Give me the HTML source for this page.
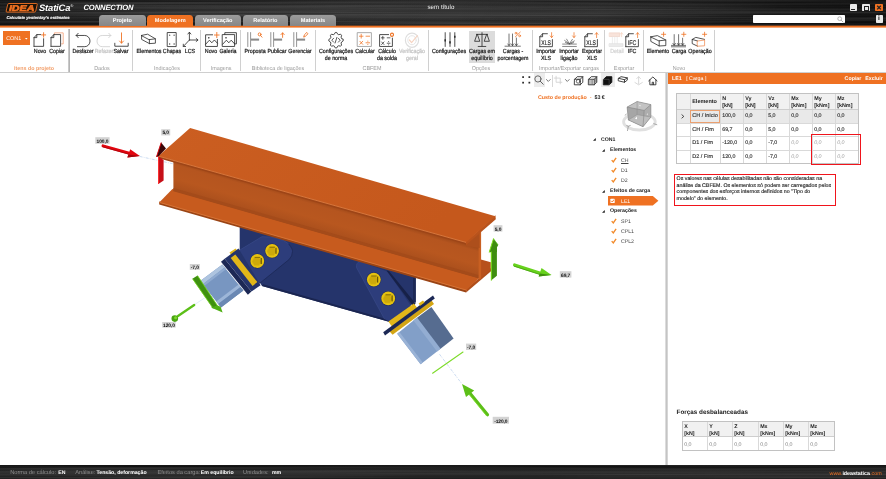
<!DOCTYPE html>
<html><head><meta charset="utf-8"><title>IDEA StatiCa Connection</title>
<style>
html,body{margin:0;padding:0;}
body{-webkit-font-smoothing:antialiased;text-rendering:geometricPrecision;width:886px;height:479px;overflow:hidden;background:#fff;font-family:"Liberation Sans",sans-serif;position:relative;color:#222;}
#root{position:absolute;left:0;top:0;width:886px;height:479px;will-change:transform;}
.a{position:absolute;}
.t{position:absolute;white-space:nowrap;line-height:1;}
.c{transform:translateX(-50%);text-align:center;}
.rl.c{transform:translateX(-50%) scaleX(0.9);}
.gl.c{transform:translateX(-50%) scaleX(0.95);}
svg{position:absolute;overflow:visible;}
#tb{left:0;top:0;width:886px;height:26px;background:
 linear-gradient(90deg,rgba(0,0,0,0.5) 0,rgba(0,0,0,0.35) 90px,rgba(0,0,0,0.05) 330px,rgba(0,0,0,0) 450px,rgba(0,0,0,0.12) 600px,rgba(0,0,0,0.55) 780px,rgba(0,0,0,0.68) 886px),
 repeating-linear-gradient(180deg,rgba(255,255,255,0.035) 0px,rgba(255,255,255,0) 1px,rgba(0,0,0,0.08) 2px,rgba(255,255,255,0) 3px),
 linear-gradient(180deg,#1a1a1a 0px,#292929 2px,#323232 6px,#353535 12px,#393939 15px,#2e2e2e 18px,#272727 22px,#202020 26px);}
.tab{z-index:2;position:absolute;top:15px;height:11px;background:linear-gradient(180deg,#9b9b9b,#878787);border-radius:3.5px 3.5px 0 0;color:#fff;font-weight:bold;font-size:5.6px;text-align:center;line-height:13px;}
.tab.on{background:#ef7122;}
.rl{font-size:5.9px;color:#1a1a1a;-webkit-text-stroke:0.22px currentColor;}
.gl{font-size:5.7px;color:#9a9a9a;}
.sep{position:absolute;top:30px;height:41px;width:0.8px;background:#d0d0d0;}
.lab{position:absolute;background:#d3d3d3;color:#111;font-weight:bold;font-size:4.9px;letter-spacing:-0.1px;line-height:6px;text-align:center;white-space:nowrap;}
</style></head><body><div id="root">
<div id="tb" class="a"></div>
<svg style="left:0;top:0" width="886" height="26" viewBox="0 0 886 26"><defs><filter id="br" x="0" y="0" width="100%" height="100%"><feTurbulence type="fractalNoise" baseFrequency="0.003 0.55" numOctaves="2" seed="7" result="n"/><feColorMatrix type="matrix" values="0 0 0 0 1  0 0 0 0 1  0 0 0 0 1  1.6 0 0 0 -0.62"/></filter></defs><rect width="886" height="26" filter="url(#br)" opacity="0.16"/></svg>
<svg style="left:6.4px;top:2.6px" width="32" height="10" viewBox="0 0 32 10"><path d="M2.9 0.5H30.4Q31.5 0.5 31.2 1.6L29.7 8.1Q29.4 9.1 28.3 9.1H0.9Q-0.1 9.1 0.2 8L1.7 1.5Q2 0.5 2.9 0.5Z" fill="#1a1208" stroke="#ef7122" stroke-width="0.9"/><text x="2.9" y="7.75" font-family="Liberation Sans" font-weight="bold" font-style="italic" font-size="8.2" fill="#ef7122" stroke="#ef7122" stroke-width="0.55" textLength="25.6" lengthAdjust="spacingAndGlyphs">IDEA</text></svg>
<div class="t" style="left:39px;top:2.8px;font-size:9.4px;font-weight:bold;font-style:italic;color:#fff;letter-spacing:-0.15px">StatiCa<span style="font-size:4px;vertical-align:4px;font-weight:normal">&#174;</span></div>
<div class="t" style="left:83.5px;top:3.6px;font-size:7.6px;font-style:italic;color:#fff;letter-spacing:-0.12px;font-weight:bold">CONNECTION</div>
<div class="t" style="left:6.5px;top:15.6px;font-size:4.2px;font-style:italic;font-weight:bold;color:#f2f2f2;-webkit-text-stroke:0.15px #f2f2f2">Calculate yesterday's estimates</div>
<div class="t" style="left:427.5px;top:5.4px;font-size:6.2px;color:#f0f0f0">sem t&iacute;tulo</div>
<div class="tab" style="left:98.8px;width:47.0px">Projeto</div>
<div class="tab on" style="left:147.2px;width:46.1px">Modelagem</div>
<div class="tab" style="left:195.0px;width:45.5px">Verifica&ccedil;&atilde;o</div>
<div class="tab" style="left:242.6px;width:45.4px">Relat&oacute;rio</div>
<div class="tab" style="left:290.0px;width:45.9px">Materiais</div>
<div class="a" style="left:0;top:25px;width:886px;height:1px;background:#6a3e22"></div><div class="a" style="left:0;top:26px;width:886px;height:1px;background:#ef7122"></div><div class="a" style="left:0;top:27px;width:886px;height:1px;background:#f6aa7a"></div>
<div class="a" style="left:849.6px;top:4px;width:7.6px;height:7.2px;background:#e9e9e9;border-radius:0.8px"></div><div class="a" style="left:851.4px;top:8.6px;width:4px;height:1.2px;background:#222"></div>
<div class="a" style="left:862.2px;top:4px;width:7.6px;height:7.2px;background:#e9e9e9;border-radius:0.8px"></div><div class="a" style="left:864px;top:5.6px;width:3.2px;height:3px;border:0.9px solid #222;border-top-width:1.5px"></div>
<div class="a" style="left:874.7px;top:4px;width:8px;height:7.2px;background:#ef7122;border-radius:0.8px"></div><svg style="left:874.7px;top:4px" width="8" height="7.2"><path d="M2.2 1.8L5.8 5.4M5.8 1.8L2.2 5.4" stroke="#222" stroke-width="1.3"/></svg>
<div class="a" style="left:752.5px;top:15.2px;width:92.5px;height:8.2px;background:#fff;border-radius:0.8px"></div><svg style="left:836.5px;top:16.2px" width="7" height="7"><circle cx="2.7" cy="2.7" r="1.9" fill="none" stroke="#999" stroke-width="0.7"/><path d="M4.1 4.1L6.3 6.3" stroke="#999" stroke-width="0.8"/></svg>
<div class="a" style="left:875.6px;top:15.2px;width:7.4px;height:8.2px;background:#e9e9e9;border-radius:0.8px"></div><div class="t" style="left:878.1px;top:16px;font-size:6.6px;font-weight:bold;color:#111">i</div>
<div class="a" style="left:0;top:28px;width:886px;height:43.5px;background:#fff;border-bottom:0.8px solid #cfcfcf"></div>
<div class="a" style="left:3px;top:31px;width:26.8px;height:13.6px;background:#ef7122"></div><div class="t" style="left:6.2px;top:36.6px;font-size:5.4px;color:#fff">CON1</div><svg style="left:24.9px;top:37.6px" width="3" height="2"><polygon points="0,0 2.6,0 1.3,1.6" fill="#fff"/></svg>
<div class="sep" style="left:69.0px"></div><div class="sep" style="left:132.0px"></div><div class="sep" style="left:200.0px"></div><div class="sep" style="left:240.0px"></div><div class="sep" style="left:314.5px"></div><div class="sep" style="left:428.0px"></div><div class="sep" style="left:532.0px"></div><div class="sep" style="left:604.0px"></div><div class="sep" style="left:642.8px"></div><div class="sep" style="left:713.6px"></div><div class="a" style="left:68px;top:29px;width:2px;height:43px;background:linear-gradient(90deg,#c9c9c9 0,#c9c9c9 1px,#b4b4b4 1px)"></div>
<div class="t c gl" style="left:34.3px;top:66.6px;color:#f3a06c;font-weight:bold;font-size:5.5px;transform:translateX(-50%) scaleX(0.97);">Itens do projeto</div><div class="t c gl" style="left:101.5px;top:66.6px;">Dados</div><div class="t c gl" style="left:167.0px;top:66.6px;">Indica&ccedil;&otilde;es</div><div class="t c gl" style="left:221.0px;top:66.6px;">Imagens</div><div class="t c gl" style="left:278.0px;top:66.6px;">Biblioteca de liga&ccedil;&otilde;es</div><div class="t c gl" style="left:372.0px;top:66.6px;">CBFEM</div><div class="t c gl" style="left:481.0px;top:66.6px;">Op&ccedil;&otilde;es</div><div class="t c gl" style="left:569.0px;top:66.6px;">Importar/Exportar cargas</div><div class="t c gl" style="left:624.0px;top:66.6px;">Exportar</div><div class="t c gl" style="left:679.0px;top:66.6px;">Novo</div>
<div class="a" style="left:469px;top:31px;width:26.2px;height:32.4px;background:#dcdcdc"></div>
<div class="t c rl" style="left:39.5px;top:50px;color:#1a1a1a">Novo</div><div class="t c rl" style="left:57.0px;top:50px;color:#1a1a1a">Copiar</div><div class="t c rl" style="left:83.0px;top:50px;color:#1a1a1a">Desfazer</div><div class="t c rl" style="left:103.5px;top:50px;color:#c4c4c4">Refazer</div><div class="t c rl" style="left:121.0px;top:50px;color:#1a1a1a">Salvar</div><div class="t c rl" style="left:148.8px;top:50px;color:#1a1a1a">Elementos</div><div class="t c rl" style="left:171.8px;top:50px;color:#1a1a1a">Chapas</div><div class="t c rl" style="left:190.0px;top:50px;color:#1a1a1a">LCS</div><div class="t c rl" style="left:211.0px;top:50px;color:#1a1a1a">Novo</div><div class="t c rl" style="left:228.3px;top:50px;color:#1a1a1a">Galeria</div><div class="t c rl" style="left:255.0px;top:50px;color:#1a1a1a">Proposta</div><div class="t c rl" style="left:277.2px;top:50px;color:#1a1a1a">Publicar</div><div class="t c rl" style="left:299.8px;top:50px;color:#1a1a1a">Gerenciar</div><div class="t c rl" style="left:335.8px;top:50px;color:#1a1a1a">Configura&ccedil;&otilde;es</div><div class="t c rl" style="left:335.8px;top:56.8px;color:#1a1a1a">de norma</div><div class="t c rl" style="left:364.8px;top:50px;color:#1a1a1a">Calcular</div><div class="t c rl" style="left:386.5px;top:50px;color:#1a1a1a">C&aacute;lculo</div><div class="t c rl" style="left:386.5px;top:56.8px;color:#1a1a1a">da solda</div><div class="t c rl" style="left:411.8px;top:50px;color:#c4c4c4">Verifica&ccedil;&atilde;o</div><div class="t c rl" style="left:411.8px;top:56.8px;color:#c4c4c4">geral</div><div class="t c rl" style="left:449.3px;top:50px;color:#1a1a1a">Configura&ccedil;&otilde;es</div><div class="t c rl" style="left:482.2px;top:50px;color:#1a1a1a">Cargas em</div><div class="t c rl" style="left:482.2px;top:56.8px;color:#1a1a1a">equil&iacute;brio</div><div class="t c rl" style="left:513.3px;top:50px;color:#1a1a1a">Cargas -</div><div class="t c rl" style="left:513.3px;top:56.8px;color:#1a1a1a">porcentagem</div><div class="t c rl" style="left:546.4px;top:50px;color:#1a1a1a">Importar</div><div class="t c rl" style="left:546.4px;top:56.8px;color:#1a1a1a">XLS</div><div class="t c rl" style="left:569.3px;top:50px;color:#1a1a1a">Importar</div><div class="t c rl" style="left:569.3px;top:56.8px;color:#1a1a1a">liga&ccedil;&atilde;o</div><div class="t c rl" style="left:591.5px;top:50px;color:#1a1a1a">Exportar</div><div class="t c rl" style="left:591.5px;top:56.8px;color:#1a1a1a">XLS</div><div class="t c rl" style="left:616.5px;top:50px;color:#d2d2d2">Detail</div><div class="t c rl" style="left:632.3px;top:50px;color:#1a1a1a">IFC</div><div class="t c rl" style="left:657.5px;top:50px;color:#1a1a1a">Elemento</div><div class="t c rl" style="left:678.5px;top:50px;color:#1a1a1a">Carga</div><div class="t c rl" style="left:699.5px;top:50px;color:#1a1a1a">Opera&ccedil;&atilde;o</div>
<svg style="left:33.0px;top:31.9px" width="14" height="15.12" viewBox="0 0 14 14" preserveAspectRatio="none" fill="none" stroke-linecap="round" stroke-linejoin="round"><path d="M1 13.3V5.2L3.8 2.4H7.6M10.6 6.2V13.3H1M1 5.2H3.8V2.4" stroke="#2a2a2a" stroke-width="0.8"/><path d="M10.6 0.6V4.8M8.5 2.7H12.7" stroke="#ef7122" stroke-width="0.85"/></svg>
<svg style="left:50.0px;top:31.9px" width="14" height="15.12" viewBox="0 0 14 14" preserveAspectRatio="none" fill="none" stroke-linecap="round" stroke-linejoin="round"><path d="M4.4 2.2V0.8H13.2V11H11.6" stroke="#f3a27a" stroke-width="0.8"/><path d="M1 13.3V5.2L3.8 2.4H10.6V13.3H1M1 5.2H3.8V2.4" stroke="#2a2a2a" stroke-width="0.8"/></svg>
<svg style="left:75.0px;top:31.9px" width="16" height="15.12" viewBox="0 0 16 14" preserveAspectRatio="none" fill="none" stroke-linecap="round" stroke-linejoin="round"><path d="M1.2 3.2H9.8A5.2 5.2 0 0 1 9.8 13.6H2.4" stroke="#2a2a2a" stroke-width="0.8"/><path d="M3.2 1.2L1.2 3.2L3.2 5.2" stroke="#2a2a2a" stroke-width="0.8"/></svg>
<svg style="left:96.0px;top:31.9px" width="16" height="15.12" viewBox="0 0 16 14" preserveAspectRatio="none" fill="none" stroke-linecap="round" stroke-linejoin="round"><path d="M14.8 3.2H6.2A5.2 5.2 0 0 0 6.2 13.6H13.6" stroke="#cfcfcf" stroke-width="0.8"/><path d="M12.8 1.2L14.8 3.2L12.8 5.2" stroke="#cfcfcf" stroke-width="0.8"/></svg>
<svg style="left:114.0px;top:31.9px" width="15" height="15.12" viewBox="0 0 15 14" preserveAspectRatio="none" fill="none" stroke-linecap="round" stroke-linejoin="round"><path d="M0.8 10.4V13.2H14.2V10.4" stroke="#2a2a2a" stroke-width="0.8"/><path d="M7.5 0.8V10.2M5.6 8.4L7.5 10.4L9.4 8.4" stroke="#ef7122" stroke-width="0.85"/></svg>
<svg style="left:167.2px;top:31.9px" width="10" height="15.12" viewBox="0 0 10 14" preserveAspectRatio="none" fill="none" stroke-linecap="round" stroke-linejoin="round"><rect x="0.6" y="0.5" width="8.6" height="13" stroke="#2a2a2a" stroke-width="0.8"/><circle cx="2.7" cy="2.9" r="0.6" fill="#2a2a2a"/><circle cx="7.1" cy="2.9" r="0.6" fill="#2a2a2a"/><circle cx="2.7" cy="11.1" r="0.6" fill="#2a2a2a"/><circle cx="7.1" cy="11.1" r="0.6" fill="#2a2a2a"/></svg>
<svg style="left:204.6px;top:31.9px" width="14" height="15.12" viewBox="0 0 14 14" preserveAspectRatio="none" fill="none" stroke-linecap="round" stroke-linejoin="round"><path d="M7.6 2.6H0.6V13.4H12.4V6.8" stroke="#2a2a2a" stroke-width="0.8"/><path d="M0.6 11.4L4.4 7.6L6.8 10L9.4 7.4L12.4 10.4" stroke="#2a2a2a" stroke-width="0.8"/><circle cx="3.8" cy="5.4" r="0.75" fill="#2a2a2a"/><path d="M11.8 0.4V5.2M9.4 2.8H14.2" stroke="#ef7122" stroke-width="0.85"/></svg>
<svg style="left:221.6px;top:31.9px" width="15" height="15.12" viewBox="0 0 15 14" preserveAspectRatio="none" fill="none" stroke-linecap="round" stroke-linejoin="round"><path d="M2.8 2.2V0.6H14.4V11H12.8" stroke="#2a2a2a" stroke-width="0.8"/><rect x="0.6" y="2.4" width="12" height="11" stroke="#2a2a2a" stroke-width="0.8"/><path d="M0.6 11.4L4.4 7.6L6.8 10L9.2 7.6L12.6 11" stroke="#2a2a2a" stroke-width="0.8"/><circle cx="4" cy="5.4" r="0.75" fill="#2a2a2a"/></svg>
<svg style="left:247.0px;top:31.9px" width="15" height="15.12" viewBox="0 0 15 14" preserveAspectRatio="none" fill="none" stroke-linecap="round" stroke-linejoin="round"><path d="M0.8 0.5V13.5M3.6 0.5V13.5" stroke="#777" stroke-width="0.75"/><rect x="3.9" y="6.1" width="8.2" height="1.9" fill="#8a8a8a"/><circle cx="12.6" cy="2.2" r="1.4" stroke="#ef7122" stroke-width="0.85"/><path d="M13.6 3.3L15 4.8" stroke="#ef7122" stroke-width="0.85"/></svg>
<svg style="left:269.5px;top:31.9px" width="15" height="15.12" viewBox="0 0 15 14" preserveAspectRatio="none" fill="none" stroke-linecap="round" stroke-linejoin="round"><path d="M0.8 0.5V13.5M3.6 0.5V13.5" stroke="#777" stroke-width="0.75"/><rect x="3.9" y="6.1" width="8.2" height="1.9" fill="#8a8a8a"/><path d="M12.6 5V0.8M11 2.4L12.6 0.8L14.2 2.4" stroke="#ef7122" stroke-width="0.85"/></svg>
<svg style="left:293.0px;top:31.9px" width="15" height="15.12" viewBox="0 0 15 14" preserveAspectRatio="none" fill="none" stroke-linecap="round" stroke-linejoin="round"><path d="M0.8 0.5V13.5M3.6 0.5V13.5" stroke="#777" stroke-width="0.75"/><rect x="3.9" y="6.1" width="8.2" height="1.9" fill="#8a8a8a"/><path d="M10.8 4.4L11.4 2.6L13.8 0.4L15 1.6L12.6 3.8Z" stroke="#ef7122" stroke-width="0.85"/></svg>
<svg style="left:328.0px;top:31.5px" width="16" height="16.20" viewBox="0 0 16 15" preserveAspectRatio="none" fill="none" stroke-linecap="round" stroke-linejoin="round"><polygon points="15.17,6.89 15.17,8.31 13.55,9.28 13.12,10.33 13.57,12.17 12.57,13.17 10.73,12.72 9.68,13.15 8.71,14.77 7.29,14.77 6.32,13.15 5.27,12.72 3.43,13.17 2.43,12.17 2.88,10.33 2.45,9.28 0.83,8.31 0.83,6.89 2.45,5.92 2.88,4.87 2.43,3.03 3.43,2.03 5.27,2.48 6.32,2.05 7.29,0.43 8.71,0.43 9.68,2.05 10.73,2.48 12.57,2.03 13.57,3.03 13.12,4.87 13.55,5.92" stroke="#2a2a2a" stroke-width="0.8"/><path d="M5.6 5.8L3.8 7.6L5.6 9.4M10.4 5.8L12.2 7.6L10.4 9.4M8.9 5L7.1 10.2" stroke="#2a2a2a" stroke-width="0.75"/></svg>
<svg style="left:357.4px;top:31.9px" width="15" height="15.12" viewBox="0 0 15 14" preserveAspectRatio="none" fill="none" stroke-linecap="round" stroke-linejoin="round"><rect x="0.6" y="0.6" width="13.8" height="12.8" stroke="#9a9a9a" stroke-width="0.8"/><path d="M2.4 3.9H6M4.2 2.1V5.7M9 3.9H12.6M2.9 8.6L5.7 11.4M5.7 8.6L2.9 11.4M9 10H12.6M10.8 8.4V8.6M10.8 11.4V11.6" stroke="#ef7122" stroke-width="0.75"/></svg>
<svg style="left:378.6px;top:31.9px" width="17" height="15.12" viewBox="0 0 17 14" preserveAspectRatio="none" fill="none" stroke-linecap="round" stroke-linejoin="round"><path d="M9.6 2.4H0.6V13.4H13.4V5.6" stroke="#2a2a2a" stroke-width="0.8"/><path d="M2.4 5.4H5.2M3.8 4V6.8M8.2 5.4H11M2.6 9.2L5 11.6M5 9.2L2.6 11.6M8.2 10.4H11M9.6 8.8V9M9.6 11.8V12" stroke="#2a2a2a" stroke-width="0.7"/><circle cx="13" cy="2.6" r="1.5" fill="#fff" stroke="#ef7122" stroke-width="1.1"/></svg>
<svg style="left:404.0px;top:31.7px" width="16" height="16.20" viewBox="0 0 16 15" preserveAspectRatio="none" fill="none" stroke-linecap="round" stroke-linejoin="round"><circle cx="8" cy="7.6" r="6.6" stroke="#dedede" stroke-width="1.2"/><circle cx="8" cy="7.6" r="4.2" stroke="#e4e4e4" stroke-width="0.9"/><path d="M5.4 7.4L7.6 9.8L13.4 3.4" stroke="#f6d3c0" stroke-width="1.1"/></svg>
<svg style="left:442.6px;top:31.9px" width="14" height="15.12" viewBox="0 0 14 14" preserveAspectRatio="none" fill="none" stroke-linecap="round" stroke-linejoin="round"><path d="M2.2 0.6V13.4M7 0.6V13.4M11.8 0.6V13.4" stroke="#2a2a2a" stroke-width="0.8"/><path d="M2.2 6.8V8.8M7 8.6V10.6M11.8 3.4V5.4" stroke="#2a2a2a" stroke-width="1.5" stroke-linecap="butt"/></svg>
<svg style="left:474.0px;top:31.9px" width="16" height="15.12" viewBox="0 0 16 14" preserveAspectRatio="none" fill="none" stroke-linecap="round" stroke-linejoin="round"><path d="M8 0.6V13M4.2 13.4H11.8M2.4 2.2H13.6M3 2.2L0.6 8.6H5.8L3.4 2.2M12.6 2.2L10.2 8.6H15.4L13 2.2" stroke="#2a2a2a" stroke-width="0.8"/></svg>
<svg style="left:539.0px;top:31.9px" width="15" height="15.12" viewBox="0 0 15 14" preserveAspectRatio="none" fill="none" stroke-linecap="round" stroke-linejoin="round"><path d="M0.8 13.6V4.4L3.6 1.6H8.4M13.4 7V13.6H0.8M0.8 4.4H3.6V1.6" stroke="#2a2a2a" stroke-width="0.8"/><text x="7.1" y="11.6" font-family="Liberation Sans" font-size="6.2" fill="#222" stroke="#222" stroke-width="0.12" text-anchor="middle" textLength="9.6" lengthAdjust="spacingAndGlyphs">XLS</text><path d="M12.6 0.6V5M11.2 3.6L12.6 5.2L14 3.6" stroke="#ef7122" stroke-width="0.7"/></svg>
<svg style="left:562.0px;top:31.9px" width="15" height="15.12" viewBox="0 0 15 14" preserveAspectRatio="none" fill="none" stroke-linecap="round" stroke-linejoin="round"><path d="M0.6 11.2H14.4M0.6 13.4H14.4M7.4 11L2.6 7.8M7.4 11L4.6 6.6M7.4 11L10.4 6.8M7.4 11L12.4 8.2M3.4 9.6L6 10.8M11.6 9.8L9 10.8" stroke="#444" stroke-width="0.6"/><path d="M12 0.6V5M10.6 3.6L12 5.2L13.4 3.6" stroke="#ef7122" stroke-width="0.7"/></svg>
<svg style="left:584.4px;top:31.9px" width="15" height="15.12" viewBox="0 0 15 14" preserveAspectRatio="none" fill="none" stroke-linecap="round" stroke-linejoin="round"><path d="M0.8 13.6V4.4L3.6 1.6H8.4M13.4 7V13.6H0.8M0.8 4.4H3.6V1.6" stroke="#2a2a2a" stroke-width="0.8"/><text x="7.1" y="11.6" font-family="Liberation Sans" font-size="6.2" fill="#222" stroke="#222" stroke-width="0.12" text-anchor="middle" textLength="9.6" lengthAdjust="spacingAndGlyphs">XLS</text><path d="M12.6 5.2V0.8M11.2 2.2L12.6 0.6L14 2.2" stroke="#ef7122" stroke-width="0.7"/></svg>
<svg style="left:608.6px;top:31.9px" width="15" height="15.12" viewBox="0 0 15 14" preserveAspectRatio="none" fill="none" stroke-linecap="round" stroke-linejoin="round"><rect x="0.6" y="0.8" width="10.2" height="3.4" fill="#f8e3da" stroke="#f1cfc2" stroke-width="0.6"/><path d="M12.6 4.4V0.8M11.4 2L12.6 0.6L13.8 2" stroke="#f6d3c0" stroke-width="0.7"/><path d="M3.4 4.4V10.6M5.8 4.4V10.6M8.2 4.4V10.6" stroke="#e2e2e2" stroke-width="0.6"/><rect x="0.4" y="10.8" width="13.6" height="2.6" fill="#ececec" stroke="#d8d8d8" stroke-width="0.5"/></svg>
<svg style="left:625.0px;top:31.9px" width="15" height="15.12" viewBox="0 0 15 14" preserveAspectRatio="none" fill="none" stroke-linecap="round" stroke-linejoin="round"><path d="M0.8 13.6V4.4L3.6 1.6H8.4M13.4 7V13.6H0.8M0.8 4.4H3.6V1.6" stroke="#2a2a2a" stroke-width="0.8"/><text x="7.1" y="11.6" font-family="Liberation Sans" font-size="6.2" fill="#222" stroke="#222" stroke-width="0.12" text-anchor="middle" textLength="8.6" lengthAdjust="spacingAndGlyphs">IFC</text><path d="M12.6 5.2V0.8M11.2 2.2L12.6 0.6L14 2.2" stroke="#ef7122" stroke-width="0.7"/></svg>
<svg style="left:0;top:0" width="886" height="80" viewBox="0 0 886 80" fill="none" stroke-linecap="round" stroke-linejoin="round"><path d="M650.8 36.8L657.4 35.6L665.8 40L659.2 40.8ZM650.8 36.8V41.4L659.2 46V40.8M659.2 46L665.8 45.6V40" stroke="#2a2a2a" stroke-width="0.8"/><path d="M663.6 32.2V36.4M661.5 34.3H665.7" stroke="#ef7122" stroke-width="0.8"/><path d="M674.2 34.6V45M672.9 43.4L674.2 45.2L675.5 43.4M678.6 34.6V45M677.3 43.4L678.6 45.2L679.9 43.4M682.6 38.2V45M681.3 43.4L682.6 45.2L683.9 43.4M671.4 45.4H685.6M671.4 46.8H685.6" stroke="#2a2a2a" stroke-width="0.65"/><path d="M683.8 32.2V36.4M681.7 34.3H685.9" stroke="#ef7122" stroke-width="0.8"/><path d="M697.6 41L692.2 39.4L695.8 37.4L704.6 39.4M692.2 39.4V43.6L697.6 46.2" stroke="#2a2a2a" stroke-width="0.8"/><path d="M697.6 41L704.6 40V45.8L697.6 46.2Z" stroke="#f0905a" stroke-width="0.8"/><path d="M704.6 32.2V36.4M702.5 34.3H706.7" stroke="#ef7122" stroke-width="0.8"/></svg>
<svg style="left:0;top:0" width="886" height="80" viewBox="0 0 886 80" fill="none" stroke-linecap="round" stroke-linejoin="round"><path d="M141.6 35.4L147.6 34.2L155.4 38.8L149.4 39.6ZM141.6 35.4V39.4L149.4 43.6V39.6M149.4 43.6L155.4 43.2V38.8" stroke="#2a2a2a" stroke-width="0.8"/><path d="M189.4 40V32.4M187.9 34L189.4 32.2L190.9 34M189.4 40H197.8M196.2 38.5L198 40L196.2 41.5M189.4 40L183.4 46.4M183.3 44.2V46.5H185.6" stroke="#2a2a2a" stroke-width="0.8"/></svg>
<svg style="left:0;top:0" width="886" height="80" viewBox="0 0 886 80" fill="none" stroke-linecap="round" stroke-linejoin="round"><path d="M509 34V45.4M507.8 44L509 45.6L510.2 44M512.5 34V45.4M511.3 44L512.5 45.6L513.7 44M516.4 38V45.4M515.2 44L516.4 45.6L517.6 44M505 46.2H520.4" stroke="#2a2a2a" stroke-width="0.65"/><path d="M515.4 36.8L520.2 32.2" stroke="#ef7122" stroke-width="0.8"/><circle cx="516" cy="33.2" r="0.95" stroke="#ef7122" stroke-width="0.7"/><circle cx="519.6" cy="35.8" r="0.95" stroke="#ef7122" stroke-width="0.7"/></svg>
<div class="a" style="left:533.6px;top:73.4px;width:11px;height:14px;background:#ececec"></div><div class="a" style="left:600.8px;top:73.4px;width:14.6px;height:14px;background:#ececec"></div><div class="a" style="left:552px;top:74.5px;width:0.7px;height:12px;background:#d8d8d8"></div>
<svg style="left:522.16px;top:76.44px" width="9.28" height="8.12" viewBox="0 0 8 7" fill="none" stroke-linecap="round" stroke-linejoin="round"><rect x="0.2" y="0.2" width="1.5" height="1.5" fill="#2a2a2a"/><rect x="5.6" y="0.2" width="1.5" height="1.5" fill="#2a2a2a"/><rect x="0.2" y="5" width="1.5" height="1.5" fill="#2a2a2a"/><rect x="5.6" y="5" width="1.5" height="1.5" fill="#2a2a2a"/></svg>
<svg style="left:534.28px;top:75.48px" width="10.44" height="10.44" viewBox="0 0 9 9" fill="none" stroke-linecap="round" stroke-linejoin="round"><circle cx="3.4" cy="3.4" r="2.7" stroke="#555" stroke-width="0.75"/><path d="M5.4 5.4L8 8" stroke="#555" stroke-width="0.8"/></svg>
<svg style="left:546.28px;top:78.96px" width="4.64" height="3.48" viewBox="0 0 4 3" fill="none" stroke-linecap="round" stroke-linejoin="round"><path d="M0.4 0.5L2 2.1L3.6 0.5" stroke="#555" stroke-width="0.7"/></svg>
<svg style="left:554.04px;top:76.44px" width="8.12" height="8.12" viewBox="0 0 7 7" fill="none" stroke-linecap="round" stroke-linejoin="round"><path d="M1.8 0.2V5.4H6.8M0.2 1.8H5.4V6.8" stroke="#cdcdcd" stroke-width="0.7"/></svg>
<svg style="left:565.28px;top:78.96px" width="4.64" height="3.48" viewBox="0 0 4 3" fill="none" stroke-linecap="round" stroke-linejoin="round"><path d="M0.4 0.5L2 2.1L3.6 0.5" stroke="#555" stroke-width="0.7"/></svg>
<svg style="left:573.93px;top:75.73px" width="9.74" height="9.74" viewBox="0 0 8.4 8.4" fill="none" stroke-linecap="round" stroke-linejoin="round"><path d="M0.6 2.8L2.8 0.6H7.6V5.4L5.4 7.6H0.6ZM0.6 2.8H5.4V7.6M5.4 2.8L7.6 0.6" stroke="#2a2a2a" stroke-width="0.75"/><circle cx="3.6" cy="4.6" r="1.6" stroke="#2a2a2a" stroke-width="0.6"/></svg>
<svg style="left:588.33px;top:75.73px" width="9.74" height="9.74" viewBox="0 0 8.4 8.4" fill="none" stroke-linecap="round" stroke-linejoin="round"><path d="M0.6 2.8L2.8 0.6H7.6V5.4L5.4 7.6H0.6ZM0.6 2.8H5.4V7.6M5.4 2.8L7.6 0.6" stroke="#2a2a2a" stroke-width="0.75"/><path d="M1.6 3.6V7M2.8 3.4V7M4 3.4V7M6.2 2.4V6M7 1.6V5.2" stroke="#2a2a2a" stroke-width="0.45"/></svg>
<svg style="left:603.33px;top:75.73px" width="9.74" height="9.74" viewBox="0 0 8.4 8.4" fill="none" stroke-linecap="round" stroke-linejoin="round"><path d="M0.6 2.8L2.8 0.6H7.6V5.4L5.4 7.6H0.6Z" fill="#111" stroke="#111" stroke-width="0.8"/><path d="M0.8 2.9H5.3V7.4" stroke="#777" stroke-width="0.35"/></svg>
<svg style="left:618.31px;top:76.44px" width="9.98" height="8.12" viewBox="0 0 8.6 7" fill="none" stroke-linecap="round" stroke-linejoin="round"><path d="M0.5 2L2.6 0.6L8 1.6V3.6L5.6 5.4L0.5 4.2ZM0.5 2L5.6 3.2L8 1.6M5.6 3.2V5.4" stroke="#2a2a2a" stroke-width="0.75"/></svg>
<svg style="left:633.56px;top:75.73px" width="9.28" height="9.74" viewBox="0 0 8 8.4" fill="none" stroke-linecap="round" stroke-linejoin="round"><path d="M4 0.6V6.8M2.4 2.2L4 0.6L5.6 2.2M0.8 5.6L4 7.6L7.2 5.6" stroke="#d0d0d0" stroke-width="0.7"/></svg>
<svg style="left:648.13px;top:75.73px" width="9.74" height="9.74" viewBox="0 0 8.4 8.4" fill="none" stroke-linecap="round" stroke-linejoin="round"><path d="M0.6 4.2L4.2 0.8L7.8 4.2M1.6 3.4V7.6H6.8V3.4M3.6 7.4V5.4H4.8V7.4" stroke="#2a2a2a" stroke-width="0.75"/></svg>
<div class="t" style="left:538px;top:96.1px;font-size:5.35px;font-weight:bold;color:#ef7122">Custo de produ&ccedil;&atilde;o<span style="color:#f3a06c"> &nbsp;-&nbsp; </span><span style="color:#222">53 &euro;</span></div>
<svg style="left:0;top:0" width="886" height="479" viewBox="0 0 886 479"><ellipse cx="639.4" cy="121.8" rx="15.8" ry="8.2" fill="none" stroke="#e0e0e0" stroke-width="2.9"/><polygon points="627.1,107.1 637.1,101.5 650.9,104.6 650.9,117.1 643,126.7 628.4,120" fill="#b9b9b9"/><polygon points="627.1,107.1 637.1,101.5 650.9,104.6 644.2,110.4" fill="#c3c3c3"/><polygon points="627.1,107.1 644.2,110.4 643,126.7 628.4,120" fill="#a6a6a6"/><polygon points="644.2,110.4 650.9,104.6 650.9,117.1 643,126.7" fill="#adadad"/><polygon points="628.4,120 637.1,114.6 650.9,117.1 643,126.7" fill="#c4c4c4" opacity="0.75"/><path d="M637.1 101.5V114.6M628.4 120L637.1 114.6L650.9 117.1" fill="none" stroke="#8c8c8c" stroke-width="0.5"/><path d="M627.1 107.1L637.1 101.5L650.9 104.6V117.1L643 126.7L628.4 120ZM627.1 107.1L644.2 110.4L650.9 104.6M644.2 110.4L643 126.7" fill="none" stroke="#858585" stroke-width="0.6"/><polygon points="639,105.6 640.6,105 640.2,106.6" fill="#fff"/><polygon points="635,118.8 636.8,116.4 637,119.2" fill="#fff"/><polygon points="646.6,114.4 647.6,113 647.8,115.2" fill="#e8e8e8"/><path d="M628.4 126.2L627.4 131M628.4 126.2L626.4 125.6M628.4 126.2L630.6 125.4M653.4 123.6L657.2 124.8M626.6 114L624.8 115.4" stroke="#8a8a8a" stroke-width="0.7" fill="none"/></svg>
<svg style="left:592.8px;top:138.0px" width="3" height="3"><polygon points="2.8,0 2.8,2.8 0,2.8" fill="#222"/></svg><div class="t" style="left:601.0px;top:138.0px;font-size:5.2px;font-weight:bold;">CON1</div>
<svg style="left:601.8px;top:148.6px" width="3" height="3"><polygon points="2.8,0 2.8,2.8 0,2.8" fill="#222"/></svg><div class="t" style="left:610.0px;top:147.7px;font-size:5.2px;font-weight:bold;">Elementos</div>
<svg style="left:610.8px;top:156.6px" width="6" height="6" fill="none"><path d="M0.7 3.1L2.3 4.9L5.1 0.9" stroke="#f28a2a" stroke-width="1.35"/></svg><div class="t" style="left:621.0px;top:158.9px;font-size:5.2px;text-decoration:underline;color:#444;">CH</div>
<svg style="left:610.8px;top:166.9px" width="6" height="6" fill="none"><path d="M0.7 3.1L2.3 4.9L5.1 0.9" stroke="#f28a2a" stroke-width="1.35"/></svg><div class="t" style="left:621.0px;top:169.2px;font-size:5.2px;color:#444;">D1</div>
<svg style="left:610.8px;top:177.2px" width="6" height="6" fill="none"><path d="M0.7 3.1L2.3 4.9L5.1 0.9" stroke="#f28a2a" stroke-width="1.35"/></svg><div class="t" style="left:621.0px;top:179.4px;font-size:5.2px;color:#444;">D2</div>
<svg style="left:601.8px;top:189.6px" width="3" height="3"><polygon points="2.8,0 2.8,2.8 0,2.8" fill="#222"/></svg><div class="t" style="left:610.0px;top:188.8px;font-size:5.2px;font-weight:bold;">Efeitos de carga</div>
<svg style="left:607.8px;top:195.6px" width="51" height="10"><polygon points="0,0 44.8,0 50.4,4.8 44.8,9.6 0,9.6" fill="#ef7122"/><rect x="2.4" y="2.7" width="4.3" height="4.3" fill="#fff" rx="0.6"/><path d="M3.3 4.9L4.3 6L6 3.6" stroke="#ef7122" stroke-width="0.9" fill="none"/></svg><div class="t" style="left:621.0px;top:199.9px;font-size:5.2px;color:#fff;">LE1</div>
<svg style="left:601.8px;top:210.2px" width="3" height="3"><polygon points="2.8,0 2.8,2.8 0,2.8" fill="#222"/></svg><div class="t" style="left:610.0px;top:209.3px;font-size:5.2px;font-weight:bold;">Opera&ccedil;&otilde;es</div>
<svg style="left:610.8px;top:217.8px" width="6" height="6" fill="none"><path d="M0.7 3.1L2.3 4.9L5.1 0.9" stroke="#f28a2a" stroke-width="1.35"/></svg><div class="t" style="left:621.0px;top:220.0px;font-size:5.2px;color:#444;">SP1</div>
<svg style="left:610.8px;top:228.0px" width="6" height="6" fill="none"><path d="M0.7 3.1L2.3 4.9L5.1 0.9" stroke="#f28a2a" stroke-width="1.35"/></svg><div class="t" style="left:621.0px;top:230.0px;font-size:5.2px;color:#444;">CPL1</div>
<svg style="left:610.8px;top:238.2px" width="6" height="6" fill="none"><path d="M0.7 3.1L2.3 4.9L5.1 0.9" stroke="#f28a2a" stroke-width="1.35"/></svg><div class="t" style="left:621.0px;top:239.8px;font-size:5.2px;color:#444;">CPL2</div>
<svg style="left:0;top:0" width="886" height="479" viewBox="0 0 886 479"><defs><linearGradient id="gw" gradientUnits="userSpaceOnUse" x1="300" y1="197.6" x2="292" y2="225.6"><stop offset="0" stop-color="#a64d1b"/><stop offset="0.1" stop-color="#b5551f"/><stop offset="0.55" stop-color="#b8571f"/><stop offset="0.85" stop-color="#ad511d"/><stop offset="1" stop-color="#a24a1a"/></linearGradient><linearGradient id="gt" x1="0" y1="0" x2="1" y2="0.3"><stop offset="0" stop-color="#cb5e21"/><stop offset="1" stop-color="#c5581c"/></linearGradient><linearGradient id="gtube1" gradientUnits="userSpaceOnUse" x1="212" y1="272" x2="233" y2="298"><stop offset="0" stop-color="#b4c8e2"/><stop offset="0.18" stop-color="#8ba6cc"/><stop offset="0.75" stop-color="#7391bc"/><stop offset="0.9" stop-color="#9ab3d6"/><stop offset="1" stop-color="#6785b0"/></linearGradient><radialGradient id="gb" cx="0.4" cy="0.6" r="0.7"><stop offset="0" stop-color="#ecc51f"/><stop offset="0.7" stop-color="#dcae16"/><stop offset="1" stop-color="#a8830c"/></radialGradient></defs><polygon points="239.7,226 239.7,250.5 262,286 389.9,322 415.6,301.5 415.6,276" fill="#25346b"/><polygon points="262,286 389.9,322 390.4,320.2 263,284.2" fill="#1a2550"/><path d="M230.7,255.5 L262,236.7 Q280,236.5 288.6,243.8 Q293,249.5 292.5,251.5 Q292.5,256 289,259.6 L259.6,283.4 Z" fill="#2d3d7b"/><path d="M230.7,255.5 L262,236.7 Q280,236.5 288.6,243.8" fill="none" stroke="#3a4b89" stroke-width="0.7"/><path d="M288.6,243.8 Q293,249.5 292.5,251.5 Q292.5,256 289,259.6 L259.6,283.4" fill="none" stroke="#1c2855" stroke-width="0.8"/><path d="M356.5,267.5 Q355.8,262.6 360,261.6 L387.8,271.7 L411.8,307.2 L389.9,322 L384.5,319 Z" fill="#2d3d7b"/><path d="M384.5,319 L356.5,267.5 Q355.8,262.6 360,261.6" fill="none" stroke="#3a4b89" stroke-width="0.6"/><polygon points="386.4,270.6 389,271 415.6,303.6 413.4,306.6" fill="#172148"/><polygon points="413,278 415.8,276 415.8,303 413,301" fill="#1c2855"/><ellipse cx="257.3" cy="261.0" rx="7.4" ry="7.4" fill="#1f2c5e"/><ellipse cx="257.3" cy="261.0" rx="6.9" ry="6.9" fill="#e6c20f"/><polygon points="261.4,261.5 259.1,265.6 254.3,265.6 252.0,261.5 254.3,257.4 259.1,257.4" fill="#cda90a" stroke="#d9b50c" stroke-width="0.5" stroke-linejoin="round"/><path d="M261.2 258.4L261.2 263.6" fill="none" stroke="#4e4004" stroke-width="1" stroke-linecap="round"/><path d="M255.1 257.4L259.9 257.4" fill="none" stroke="#6b5806" stroke-width="0.8" stroke-linecap="round"/><ellipse cx="272.1" cy="250.8" rx="7.4" ry="7.4" fill="#1f2c5e"/><ellipse cx="272.1" cy="250.8" rx="6.9" ry="6.9" fill="#e6c20f"/><polygon points="276.2,251.3 273.9,255.4 269.1,255.4 266.8,251.3 269.1,247.2 273.9,247.2" fill="#cda90a" stroke="#d9b50c" stroke-width="0.5" stroke-linejoin="round"/><path d="M276.0 248.2L276.0 253.4" fill="none" stroke="#4e4004" stroke-width="1" stroke-linecap="round"/><path d="M269.9 247.2L274.7 247.2" fill="none" stroke="#6b5806" stroke-width="0.8" stroke-linecap="round"/><ellipse cx="373.8" cy="279.6" rx="7.4" ry="7.4" fill="#1f2c5e"/><ellipse cx="373.8" cy="279.6" rx="6.9" ry="6.9" fill="#e6c20f"/><polygon points="377.9,280.1 375.6,284.2 370.8,284.2 368.5,280.1 370.8,276.0 375.6,276.0" fill="#cda90a" stroke="#d9b50c" stroke-width="0.5" stroke-linejoin="round"/><path d="M377.7 277.0L377.7 282.2" fill="none" stroke="#4e4004" stroke-width="1" stroke-linecap="round"/><path d="M371.6 276.0L376.4 276.0" fill="none" stroke="#6b5806" stroke-width="0.8" stroke-linecap="round"/><ellipse cx="388.2" cy="298.4" rx="7.4" ry="7.4" fill="#1f2c5e"/><ellipse cx="388.2" cy="298.4" rx="6.9" ry="6.9" fill="#e6c20f"/><polygon points="392.3,298.9 389.9,303.0 385.2,303.0 382.9,298.9 385.2,294.8 389.9,294.8" fill="#cda90a" stroke="#d9b50c" stroke-width="0.5" stroke-linejoin="round"/><path d="M392.1 295.8L392.1 301.0" fill="none" stroke="#4e4004" stroke-width="1" stroke-linecap="round"/><path d="M386.0 294.8L390.8 294.8" fill="none" stroke="#6b5806" stroke-width="0.8" stroke-linecap="round"/><polygon points="200.2,281 222.3,264.6 243.4,290.4 221,307.4" fill="#7896c1"/><polygon points="200.2,281 222.3,264.6 224.6,267.4 202.8,284.2" fill="#aec4df"/><polygon points="202.8,284.2 224.6,267.4 226,269.2 204.2,286" fill="#8faad0"/><polygon points="216.2,301.4 238.6,284.6 240.6,287 218.2,304" fill="#9db6d8"/><polygon points="218.2,304 240.6,287 243.4,290.4 221,307.4" fill="#6a88b3"/><polygon points="229.5,252.6 235.6,248.6 237.6,251 231.4,255.2" fill="#e2b719"/><polygon points="221,261.8 224.6,258.8 251.4,291.6 247.9,294.8" fill="#1c2855"/><polygon points="224.6,258.8 238.5,248.5 260.6,285.2 251.4,291.6" fill="#25346b"/><polygon points="230.7,257.9 235.3,254.6 257.3,282.1 252.6,286" fill="#e2b719"/><polygon points="397.2,333.8 416,318.4 439.6,349.6 420.6,364.2" fill="#829fc8"/><polygon points="416,318.4 431.4,307 453.6,338.4 439.6,349.6" fill="#566c90"/><polygon points="413.4,320.4 417,317.6 440.6,348.8 437,351.6" fill="#93add2"/><polygon points="397.2,333.8 399.4,332 422.8,362.6 420.6,364.2" fill="#9ab3d6"/><polygon points="388.4,321.6 413.9,303.4 418,309 392.6,327.4" fill="#e2b719"/><polygon points="389.6,331.6 431.6,300.6 434,304 392.6,334.8" fill="#d3a514"/><polygon points="383.2,332.2 433,295.6 434.8,298.4 385,335.4" fill="#1c2855"/><polygon points="418.6,303.6 423,300.4 424.6,302.6 420.2,305.8" fill="#e2b719"/><polygon points="159.2,201.5 466.1,289.2 466.1,292.4 159.2,204.6" fill="#9a4415"/><polygon points="466.1,289 491,268 491,271.2 466.1,292.4" fill="#b04e1a"/><polygon points="480,259.2 490.8,262.3 490.8,269.6 480,278.8" fill="#b7511c"/><polygon points="172.4,189 480.4,276.8 466.1,290.2 159.2,202.5" fill="#c75b1e"/><path d="M159.4 202.4L466 290" stroke="#d87639" stroke-width="0.9" fill="none"/><polygon points="173.4,155 480,240 480,278.6 173.4,190.8" fill="url(#gw)"/><polygon points="173.4,188 480,275.6 480,278.8 173.4,191.2" fill="#a44b1a"/><polygon points="478.6,230 481.1,229 481.1,278.4 478.6,279.4" fill="#c96022"/><polygon points="466.1,243 479.6,231 479.6,248 466.1,246" fill="#ad4f1c"/><polygon points="158.4,155 466.1,241.2 466.1,244.6 158.6,158.2" fill="#9e4517"/><polygon points="465.6,242 495.4,215.3 495.8,219.2 466.1,245" fill="#b9531c"/><polygon points="158.4,156 190.1,127.9 495.4,216.3 466.1,242.3" fill="url(#gt)"/><path d="M158.6 156.2L466 242.4" stroke="#db7b40" stroke-width="0.9" fill="none"/><path d="M139.6 156.4L174 164" stroke="#a9c4e8" stroke-width="0.6" stroke-dasharray="3 1.2 0.8 1.2" fill="none"/><path d="M194 305L206 297" stroke="#cfe0f4" stroke-width="0.6" fill="none"/><path d="M439.5 354.2L462 384" stroke="#a9c4e8" stroke-width="0.6" stroke-dasharray="3 1.2 0.8 1.2" fill="none"/><path d="M103 145.8L130 153.4" stroke="#e2060f" stroke-width="2.9" stroke-linecap="round"/><path d="M102.8 146.8L129.6 154.4" stroke="#b0060c" stroke-width="0.9" stroke-linecap="round"/><polygon points="139.9,156.1 127.4,157.6 130.2,149.2" fill="#e2060f"/><polygon points="139.9,156.1 127.4,157.6 128.4,154.4" fill="#a4060c"/><polygon points="156.3,157 161.1,142.4 166,148.4 163.6,151 158.4,156.5" fill="#3a0608"/><path d="M156.6 156.6L161.1 142.8" stroke="#e2060f" stroke-width="0.9" stroke-linecap="round"/><polygon points="158.4,156.5 163.6,160 163.6,180.4 158.4,184" fill="#c60f18"/><path d="M158.5 156.5V184" stroke="#ff2a2a" stroke-width="0.9"/><polygon points="491,252 496.9,247 496.9,275.8 491,280.4" fill="#3f8d10"/><polygon points="489.1,252.2 493.5,238.5 498.2,245 496.9,247.4 496.9,252 491,252.2" fill="#3f8d10"/><path d="M489.3 252L493.5 238.8M491.3 252V280.2" stroke="#80e01e" stroke-width="1" stroke-linecap="round" fill="none"/><path d="M493.5 238.8L498.2 245" stroke="#5cbf18" stroke-width="0.6" fill="none"/><path d="M514.6 264.9L540.4 273.2" stroke="#67d21c" stroke-width="3.2" stroke-linecap="round"/><path d="M514.2 266.2L540 274.5" stroke="#4aa512" stroke-width="0.9" stroke-linecap="round"/><polygon points="551.5,275.1 538.7,276.6 541.5,268" fill="#67d21c"/><polygon points="551.5,275.1 538.7,276.6 539.6,273.6" fill="#3f8f10"/><polygon points="192.4,278.8 197.6,275.6 217.4,305.6 213,308.6" fill="#3f9010"/><path d="M192.6 278.8L213.2 308.4M197.6 275.8L217.6 306" stroke="#74d622" stroke-width="0.8" fill="none"/><polygon points="211,307.4 222.6,312.6 220.6,306.8 217.6,305.4" fill="#4faf14"/><path d="M194.2 305L178 316" stroke="#5cbf18" stroke-width="2.3" stroke-linecap="round"/><circle cx="174.8" cy="318.6" r="3.3" fill="#4aa512"/><circle cx="175.6" cy="317.8" r="1.5" fill="#7ddb2a"/><path d="M432.6 373.2L463 352" stroke="#7ddb2a" stroke-width="1.1" stroke-linecap="round"/><path d="M487.6 414.8L469 392" stroke="#5cbf18" stroke-width="3" stroke-linecap="round"/><path d="M486.4 415.6L468 393" stroke="#7ddb2a" stroke-width="0.9" stroke-linecap="round"/><polygon points="462,384 474.2,390.4 466,397" fill="#5cbf18"/></svg>
<svg style="left:0;top:0" width="886" height="479"><rect x="95.3" y="137.2" width="14.3" height="6.6" fill="#d3d3d3"/></svg><div class="t c" style="left:102.45px;top:141.05px;font-size:4.9px;font-weight:bold;color:#111;letter-spacing:-0.1px">100,0</div><svg style="left:0;top:0" width="886" height="479"><rect x="161.2" y="129.2" width="9.0" height="6.2" fill="#d3d3d3"/></svg><div class="t c" style="left:165.70px;top:132.05px;font-size:4.9px;font-weight:bold;color:#111;letter-spacing:-0.1px">5,0</div><svg style="left:0;top:0" width="886" height="479"><rect x="493.6" y="225.2" width="8.8" height="6.4" fill="#d3d3d3"/></svg><div class="t c" style="left:498.00px;top:229.05px;font-size:4.9px;font-weight:bold;color:#111;letter-spacing:-0.1px">5,0</div><svg style="left:0;top:0" width="886" height="479"><rect x="559.8" y="271.2" width="11.6" height="6.4" fill="#d3d3d3"/></svg><div class="t c" style="left:565.60px;top:275.05px;font-size:4.9px;font-weight:bold;color:#111;letter-spacing:-0.1px">69,7</div><svg style="left:0;top:0" width="886" height="479"><rect x="189.8" y="264.0" width="10.0" height="5.8" fill="#d3d3d3"/></svg><div class="t c" style="left:194.80px;top:267.05px;font-size:4.9px;font-weight:bold;color:#111;letter-spacing:-0.1px">-7,0</div><svg style="left:0;top:0" width="886" height="479"><rect x="162.2" y="322.0" width="13.5" height="5.6" fill="#d3d3d3"/></svg><div class="t c" style="left:168.95px;top:325.05px;font-size:4.9px;font-weight:bold;color:#111;letter-spacing:-0.1px">120,0</div><svg style="left:0;top:0" width="886" height="479"><rect x="466.0" y="343.6" width="10.2" height="6.4" fill="#d3d3d3"/></svg><div class="t c" style="left:471.10px;top:347.05px;font-size:4.9px;font-weight:bold;color:#111;letter-spacing:-0.1px">-7,0</div><svg style="left:0;top:0" width="886" height="479"><rect x="492.7" y="416.8" width="16.3" height="6.9" fill="#d3d3d3"/></svg><div class="t c" style="left:500.85px;top:421.05px;font-size:4.9px;font-weight:bold;color:#111;letter-spacing:-0.1px">-120,0</div>
<div class="a" style="left:665px;top:73px;width:3px;height:392px;background:linear-gradient(90deg,#dcdcdc 0,#dcdcdc 1px,#c4c4c4 1px,#c4c4c4 2px,#d6d6d6 2px)"></div>
<div class="a" style="left:668px;top:73px;width:218px;height:11px;background:#ef7122"></div><div class="t" style="left:672px;top:77.2px;font-size:5.3px;color:#fff"><b>LE1</b> &nbsp;&nbsp;[ Carga ]</div><div class="t" style="left:844.6px;top:77.2px;font-size:5.3px;color:#fff;font-weight:bold">Copiar</div><div class="t" style="left:865.2px;top:77.2px;font-size:5.3px;color:#fff;font-weight:bold">Excluir</div>
<div class="a" style="left:676px;top:93px;width:183px;height:71px;background:#fff"></div><div class="a" style="left:676px;top:93px;width:183px;height:16px;background:#f1f1f1"></div><div class="a" style="left:676px;top:109px;width:183px;height:14px;background:#e9e9e9"></div><div class="a" style="left:690px;top:93px;width:1px;height:71px;background:#d9d9d9"></div><div class="a" style="left:720px;top:93px;width:1px;height:71px;background:#d9d9d9"></div><div class="a" style="left:743px;top:93px;width:1px;height:71px;background:#d9d9d9"></div><div class="a" style="left:766px;top:93px;width:1px;height:71px;background:#d9d9d9"></div><div class="a" style="left:789px;top:93px;width:1px;height:71px;background:#d9d9d9"></div><div class="a" style="left:812px;top:93px;width:1px;height:71px;background:#d9d9d9"></div><div class="a" style="left:835px;top:93px;width:1px;height:71px;background:#d9d9d9"></div><div class="a" style="left:676px;top:109px;width:183px;height:1px;background:#cecece"></div><div class="a" style="left:676px;top:123px;width:183px;height:1px;background:#d9d9d9"></div><div class="a" style="left:676px;top:136px;width:183px;height:1px;background:#d9d9d9"></div><div class="a" style="left:676px;top:150px;width:183px;height:1px;background:#d9d9d9"></div><div class="a" style="left:676px;top:93px;width:183px;height:71px;border:1px solid #c2c2c2;box-sizing:border-box"></div>
<div class="t" style="left:692.2px;top:100.3px;font-size:5.5px;font-weight:bold">Elemento</div><div class="t" style="left:722.2px;top:97.2px;font-size:5.4px;font-weight:bold">N</div><div class="t" style="left:722.2px;top:104.0px;font-size:5.4px;font-weight:bold">[kN]</div><div class="t" style="left:745.2px;top:97.2px;font-size:5.4px;font-weight:bold">Vy</div><div class="t" style="left:745.2px;top:104.0px;font-size:5.4px;font-weight:bold">[kN]</div><div class="t" style="left:768.2px;top:97.2px;font-size:5.4px;font-weight:bold">Vz</div><div class="t" style="left:768.2px;top:104.0px;font-size:5.4px;font-weight:bold">[kN]</div><div class="t" style="left:791.2px;top:97.2px;font-size:5.4px;font-weight:bold">Mx</div><div class="t" style="left:791.2px;top:104.0px;font-size:5.4px;font-weight:bold">[kNm]</div><div class="t" style="left:814.2px;top:97.2px;font-size:5.4px;font-weight:bold">My</div><div class="t" style="left:814.2px;top:104.0px;font-size:5.4px;font-weight:bold">[kNm]</div><div class="t" style="left:837.2px;top:97.2px;font-size:5.4px;font-weight:bold">Mz</div><div class="t" style="left:837.2px;top:104.0px;font-size:5.4px;font-weight:bold">[kNm]</div>
<div class="t" style="left:692.2px;top:114.3px;font-size:5.5px;color:#333;-webkit-text-stroke:0.15px #333;">CH / In&iacute;cio</div><div class="t" style="left:722.2px;top:114.3px;font-size:5.3px;color:#333;-webkit-text-stroke:0.15px #333;">100,0</div><div class="t" style="left:745.2px;top:114.3px;font-size:5.3px;color:#333;-webkit-text-stroke:0.15px #333;">0,0</div><div class="t" style="left:768.2px;top:114.3px;font-size:5.3px;color:#333;-webkit-text-stroke:0.15px #333;">5,0</div><div class="t" style="left:791.2px;top:114.3px;font-size:5.3px;color:#333;-webkit-text-stroke:0.15px #333;">0,0</div><div class="t" style="left:814.2px;top:114.3px;font-size:5.3px;color:#333;-webkit-text-stroke:0.15px #333;">0,0</div><div class="t" style="left:837.2px;top:114.3px;font-size:5.3px;color:#333;-webkit-text-stroke:0.15px #333;">0,0</div><div class="t" style="left:692.2px;top:127.8px;font-size:5.5px;color:#333;-webkit-text-stroke:0.15px #333;">CH / Fim</div><div class="t" style="left:722.2px;top:127.8px;font-size:5.3px;color:#333;-webkit-text-stroke:0.15px #333;">69,7</div><div class="t" style="left:745.2px;top:127.8px;font-size:5.3px;color:#333;-webkit-text-stroke:0.15px #333;">0,0</div><div class="t" style="left:768.2px;top:127.8px;font-size:5.3px;color:#333;-webkit-text-stroke:0.15px #333;">5,0</div><div class="t" style="left:791.2px;top:127.8px;font-size:5.3px;color:#333;-webkit-text-stroke:0.15px #333;">0,0</div><div class="t" style="left:814.2px;top:127.8px;font-size:5.3px;color:#333;-webkit-text-stroke:0.15px #333;">0,0</div><div class="t" style="left:837.2px;top:127.8px;font-size:5.3px;color:#333;-webkit-text-stroke:0.15px #333;">0,0</div><div class="t" style="left:692.2px;top:141.3px;font-size:5.5px;color:#333;-webkit-text-stroke:0.15px #333;">D1 / Fim</div><div class="t" style="left:722.2px;top:141.3px;font-size:5.3px;color:#333;-webkit-text-stroke:0.15px #333;">-120,0</div><div class="t" style="left:745.2px;top:141.3px;font-size:5.3px;color:#333;-webkit-text-stroke:0.15px #333;">0,0</div><div class="t" style="left:768.2px;top:141.3px;font-size:5.3px;color:#333;-webkit-text-stroke:0.15px #333;">-7,0</div><div class="t" style="left:791.2px;top:141.3px;font-size:5.3px;color:#a0a0a0;font-style:italic;">0,0</div><div class="t" style="left:814.2px;top:141.3px;font-size:5.3px;color:#a0a0a0;font-style:italic;">0,0</div><div class="t" style="left:837.2px;top:141.3px;font-size:5.3px;color:#a0a0a0;font-style:italic;">0,0</div><div class="t" style="left:692.2px;top:154.8px;font-size:5.5px;color:#333;-webkit-text-stroke:0.15px #333;">D2 / Fim</div><div class="t" style="left:722.2px;top:154.8px;font-size:5.3px;color:#333;-webkit-text-stroke:0.15px #333;">120,0</div><div class="t" style="left:745.2px;top:154.8px;font-size:5.3px;color:#333;-webkit-text-stroke:0.15px #333;">0,0</div><div class="t" style="left:768.2px;top:154.8px;font-size:5.3px;color:#333;-webkit-text-stroke:0.15px #333;">-7,0</div><div class="t" style="left:791.2px;top:154.8px;font-size:5.3px;color:#a0a0a0;font-style:italic;">0,0</div><div class="t" style="left:814.2px;top:154.8px;font-size:5.3px;color:#a0a0a0;font-style:italic;">0,0</div><div class="t" style="left:837.2px;top:154.8px;font-size:5.3px;color:#a0a0a0;font-style:italic;">0,0</div>
<svg style="left:681px;top:114.4px" width="4" height="5" fill="none"><path d="M0.6 0.5L2.8 2.4L0.6 4.3" stroke="#222" stroke-width="0.8"/></svg><div class="a" style="left:690.4px;top:109.8px;width:29.8px;height:13px;border:0.8px solid #eaa070;box-sizing:border-box"></div>
<div class="a" style="left:810.8px;top:134.4px;width:50.2px;height:30.6px;border:1.4px solid #f0141c;box-sizing:border-box"></div><div class="a" style="left:674.4px;top:173.8px;width:162px;height:32px;border:1.4px solid #f0141c;box-sizing:border-box"></div>
<div class="t" style="left:676.6px;top:176.9px;font-size:5.28px;color:#2a2a2a;-webkit-text-stroke:0.15px #2a2a2a">Os valores nas c&eacute;lulas desabilitadas n&atilde;o s&atilde;o consideradas na</div><div class="t" style="left:676.6px;top:183.5px;font-size:5.28px;color:#2a2a2a;-webkit-text-stroke:0.15px #2a2a2a">an&aacute;lise da CBFEM. Os elementos s&oacute; podem ser carregados pelos</div><div class="t" style="left:676.6px;top:190.1px;font-size:5.28px;color:#2a2a2a;-webkit-text-stroke:0.15px #2a2a2a">componentes dos esfor&ccedil;os internos definidos no "Tipo do</div><div class="t" style="left:676.6px;top:196.7px;font-size:5.28px;color:#2a2a2a;-webkit-text-stroke:0.15px #2a2a2a">modelo" do elemento.</div>
<div class="t" style="left:676.6px;top:410.4px;font-size:6.33px;font-weight:bold;color:#222">For&ccedil;as desbalanceadas</div>
<div class="a" style="left:682px;top:421px;width:153px;height:30px;background:#fff"></div><div class="a" style="left:682px;top:421px;width:153px;height:16px;background:#f1f1f1"></div><div class="a" style="left:707px;top:421px;width:1px;height:30px;background:#d9d9d9"></div><div class="a" style="left:732px;top:421px;width:1px;height:30px;background:#d9d9d9"></div><div class="a" style="left:758px;top:421px;width:1px;height:30px;background:#d9d9d9"></div><div class="a" style="left:783px;top:421px;width:1px;height:30px;background:#d9d9d9"></div><div class="a" style="left:808px;top:421px;width:1px;height:30px;background:#d9d9d9"></div><div class="a" style="left:682px;top:436px;width:153px;height:1px;background:#cecece"></div><div class="a" style="left:682px;top:421px;width:153px;height:30px;border:1px solid #c2c2c2;box-sizing:border-box"></div><div class="t" style="left:684.2px;top:425px;font-size:5.3px;font-weight:bold">X</div><div class="t" style="left:684.2px;top:431.8px;font-size:5.3px;font-weight:bold">[kN]</div><div class="t" style="left:684.2px;top:443px;font-size:5.3px;color:#858585">0,0</div><div class="t" style="left:709.2px;top:425px;font-size:5.3px;font-weight:bold">Y</div><div class="t" style="left:709.2px;top:431.8px;font-size:5.3px;font-weight:bold">[kN]</div><div class="t" style="left:709.2px;top:443px;font-size:5.3px;color:#858585">0,0</div><div class="t" style="left:734.2px;top:425px;font-size:5.3px;font-weight:bold">Z</div><div class="t" style="left:734.2px;top:431.8px;font-size:5.3px;font-weight:bold">[kN]</div><div class="t" style="left:734.2px;top:443px;font-size:5.3px;color:#858585">0,0</div><div class="t" style="left:760.2px;top:425px;font-size:5.3px;font-weight:bold">Mx</div><div class="t" style="left:760.2px;top:431.8px;font-size:5.3px;font-weight:bold">[kNm]</div><div class="t" style="left:760.2px;top:443px;font-size:5.3px;color:#858585">0,0</div><div class="t" style="left:785.2px;top:425px;font-size:5.3px;font-weight:bold">My</div><div class="t" style="left:785.2px;top:431.8px;font-size:5.3px;font-weight:bold">[kNm]</div><div class="t" style="left:785.2px;top:443px;font-size:5.3px;color:#858585">0,0</div><div class="t" style="left:810.2px;top:425px;font-size:5.3px;font-weight:bold">Mz</div><div class="t" style="left:810.2px;top:431.8px;font-size:5.3px;font-weight:bold">[kNm]</div><div class="t" style="left:810.2px;top:443px;font-size:5.3px;color:#858585">0,0</div>
<div class="a" style="left:0;top:465px;width:886px;height:14px;background:repeating-linear-gradient(180deg,rgba(255,255,255,0.03) 0px,rgba(255,255,255,0) 1px,rgba(0,0,0,0.08) 2px,rgba(255,255,255,0) 3px),linear-gradient(180deg,#0d0d0d 0px,#161616 2px,#2a2a2a 6px,#2c2c2c 9px,#1c1c1c 14px)"></div>
<svg style="left:0;top:465px" width="886" height="14" viewBox="0 0 886 14"><rect width="886" height="14" filter="url(#br)" opacity="0.12"/></svg>
<div class="t" style="left:10.2px;top:470.6px;font-size:5.7px;color:#8c8c8c">Norma de c&aacute;lculo:</div><div class="t" style="left:58.2px;top:470.9px;font-size:5.2px;color:#fff;font-weight:bold">EN</div><div class="t" style="left:75.2px;top:470.6px;font-size:5.7px;color:#8c8c8c">An&aacute;lise:</div><div class="t" style="left:96.5px;top:470.9px;font-size:5.2px;color:#fff;font-weight:bold">Tens&atilde;o, deforma&ccedil;&atilde;o</div><div class="t" style="left:157.5px;top:470.6px;font-size:5.7px;color:#8c8c8c">Efeitos da carga:</div><div class="t" style="left:200.8px;top:470.9px;font-size:5.2px;color:#fff;font-weight:bold">Em equil&iacute;brio</div><div class="t" style="left:243.1px;top:470.6px;font-size:5.7px;color:#8c8c8c">Unidades:</div><div class="t" style="left:272.0px;top:470.9px;font-size:5.2px;color:#fff;font-weight:bold">mm</div><div class="t" style="left:829.6px;top:472px;font-size:5.35px;color:#ef7122">www.<span style="color:#fff;font-weight:bold">ideastatica</span>.com</div>
</div></body></html>
